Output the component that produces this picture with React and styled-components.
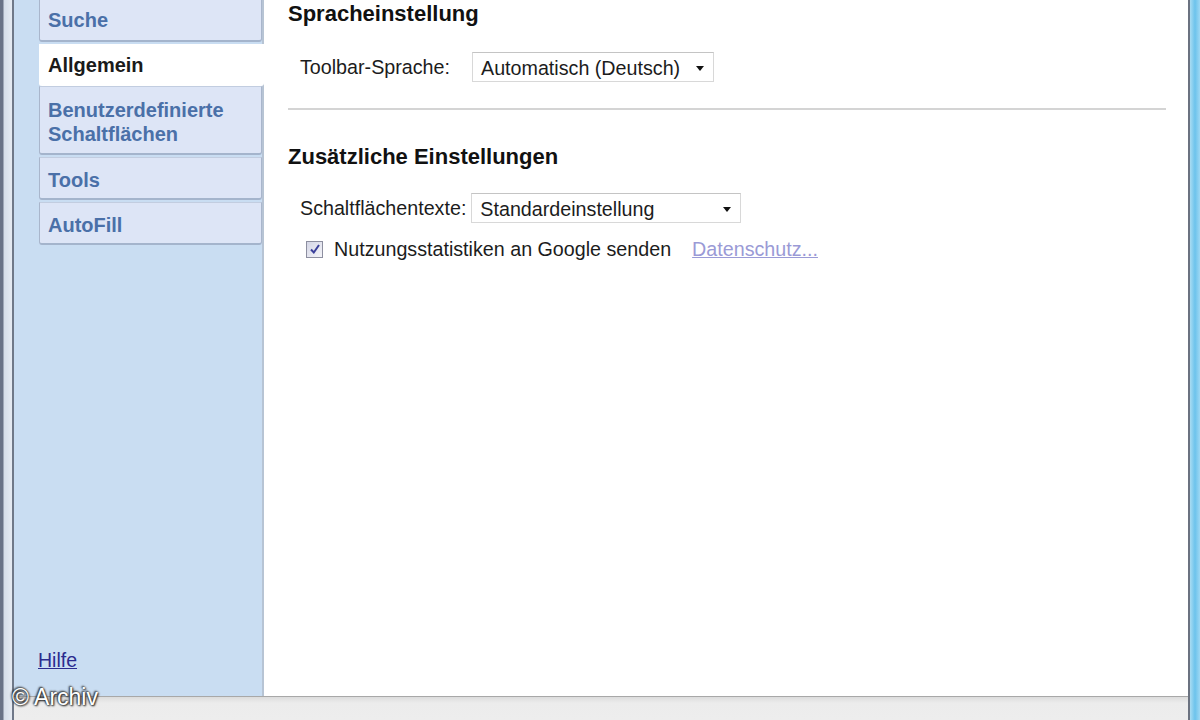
import React from "react";
import styled, { createGlobalStyle } from "styled-components";

const Global = createGlobalStyle`
  html, body { margin: 0; padding: 0; width: 1200px; height: 720px; overflow: hidden; }
  body { font-family: "Liberation Sans", Arial, sans-serif; background: #fff; }
`;

const Screen = styled.div`
  position: relative;
  width: 1200px;
  height: 720px;
  display: flex;
  background: #e9e9e9;
`;

const LeftFrame = styled.div`
  width: 12px;
  background: linear-gradient(90deg, #6a7286 0, #6a7286 3px, #d6dde8 4px, #e4e9f1 11px);
  border-right: 2px solid #6f7888;
`;

const RightFrame = styled.div`
  width: 10px;
  border-left: 2px solid #6b7280;
  background: linear-gradient(90deg, #a9dcf2 0, #6cc3ec 5px, #9fd8f3 10px);
`;

const Window = styled.div`
  flex: 1;
  display: flex;
  flex-direction: column;
`;

const Body = styled.div`
  flex: 1;
  display: flex;
  border-bottom: 1px solid #a8a8a8;
`;

const Sidebar = styled.div`
  width: 248px;
  background: #c9ddf2;
  border-right: 2px solid #b7c4d4;
  display: flex;
  flex-direction: column;
  justify-content: space-between;
`;

const TabList = styled.div`
  display: flex;
  flex-direction: column;
  padding-left: 25px;
  margin-right: -2px;
`;

const Tab = styled.div`
  font-size: 20px;
  font-weight: bold;
  line-height: 24px;
  color: ${p => (p.$active ? "#1a1a1a" : "#4a70a8")};
  background: ${p => (p.$active ? "#ffffff" : "#dde5f6")};
  border-left: 1px solid ${p => (p.$active ? "#ffffff" : "#a9b6cc")};
  border-right: ${p => (p.$active ? "none" : "1px solid #a9b6cc")};
  border-bottom: ${p => (p.$active ? "none" : "2px solid #a4b4cc")};
  border-top: ${p => (p.$first || p.$active ? "none" : "1px solid #c2cde0")};
  border-radius: 0 0 3px 3px;
  padding: ${p => p.$pad};
  padding-left: 8px;
  margin-bottom: ${p => (p.$active ? "0" : "2px")};
  margin-right: ${p => (p.$active ? "0" : "2px")};
`;

const HelpLink = styled.a`
  font-size: 19.5px;
  color: #2b2b8f;
  text-decoration: underline;
  margin: 0 0 24px 24px;
`;

const Content = styled.div`
  flex: 1;
  background: #ffffff;
  padding: 1px 22px 0 24px;
  display: flex;
  flex-direction: column;
`;

const Heading = styled.h2`
  margin: ${p => p.$top || "0"} 0 0 0;
  font-size: 22px;
  font-weight: bold;
  line-height: 26px;
  color: #111;
`;

const Row = styled.div`
  display: flex;
  align-items: center;
  padding-left: ${p => p.$indent || "12px"};
  margin-top: ${p => p.$top || "0"};
  gap: ${p => p.$gap || "8px"};
`;

const Label = styled.span`
  font-size: 19.7px;
  line-height: 24px;
  color: #1c1c1c;
  width: ${p => p.$w || "auto"};
`;

const Select = styled.div`
  width: ${p => p.$w};
  height: 30px;
  box-sizing: border-box;
  border: 1px solid #d8d8d8;
  border-top-color: #c4c4c4;
  background: #fff;
  display: flex;
  align-items: center;
  justify-content: space-between;
  padding: 3px 9px 0 8px;
  font-size: 19.7px;
  color: #1c1c1c;
`;

const Caret = styled.span`
  width: 0;
  height: 0;
  border-left: 4px solid transparent;
  border-right: 4px solid transparent;
  border-top: 5px solid #111;
`;

const Divider = styled.div`
  height: 2px;
  background: #d4d4d4;
  margin-top: 26px;
`;

const Check = styled.span`
  width: 17px;
  height: 17px;
  box-sizing: border-box;
  border: 1px solid #8d8fa0;
  background: linear-gradient(135deg, #d4d6e6, #f4f4f8);
  display: flex;
  align-items: center;
  justify-content: center;
`;

const Link = styled.a`
  font-size: 19.7px;
  color: #9a9ad6;
  text-decoration: underline;
  margin-left: 10px;
`;

const Footer = styled.div`
  height: 23px;
  background: linear-gradient(#dcdcdc, #ececec 6px, #ededed);
`;

const Watermark = styled.div`
  position: absolute;
  left: 12px;
  top: 684px;
  font-size: 23px;
  color: #fff;
  text-shadow: 0 0 2px #222, 1px 1px 2px #222, -1px -1px 2px #333;
`;

export default function App() {
  return (
    <Screen>
      <Global />
      <LeftFrame />
      <Window>
        <Body>
          <Sidebar>
            <TabList>
              <Tab $first $pad="8px 0 8px">Suche</Tab>
              <Tab $active $pad="9px 0 9px">Allgemein</Tab>
              <Tab $pad="11px 0 7px">Benutzerdefinierte<br />Schaltflächen</Tab>
              <Tab $pad="10px 0 6px">Tools</Tab>
              <Tab $pad="10px 0 6px">AutoFill</Tab>
            </TabList>
            <HelpLink>Hilfe</HelpLink>
          </Sidebar>
          <Content>
            <Heading>Spracheinstellung</Heading>
            <Row $top="25px" $gap="0">
              <Label $w="172px">Toolbar-Sprache:</Label>
              <Select $w="242px">Automatisch (Deutsch)<Caret /></Select>
            </Row>
            <Divider />
            <Heading $top="34px">Zusätzliche Einstellungen</Heading>
            <Row $top="23px" $gap="5px">
              <Label>Schaltflächentexte:</Label>
              <Select $w="270px">Standardeinstellung<Caret /></Select>
            </Row>
            <Row $top="14px" $indent="18px" $gap="11px">
              <Check>
                <svg width="12" height="12" viewBox="0 0 12 12">
                  <path d="M2 6.5 L4.8 9.5 L10 2" fill="none" stroke="#3a3f9a" strokeWidth="2" />
                </svg>
              </Check>
              <Label>Nutzungsstatistiken an Google senden</Label>
              <Link>Datenschutz...</Link>
            </Row>
          </Content>
        </Body>
        <Footer />
      </Window>
      <RightFrame />
      <Watermark>© Archiv</Watermark>
    </Screen>
  );
}
